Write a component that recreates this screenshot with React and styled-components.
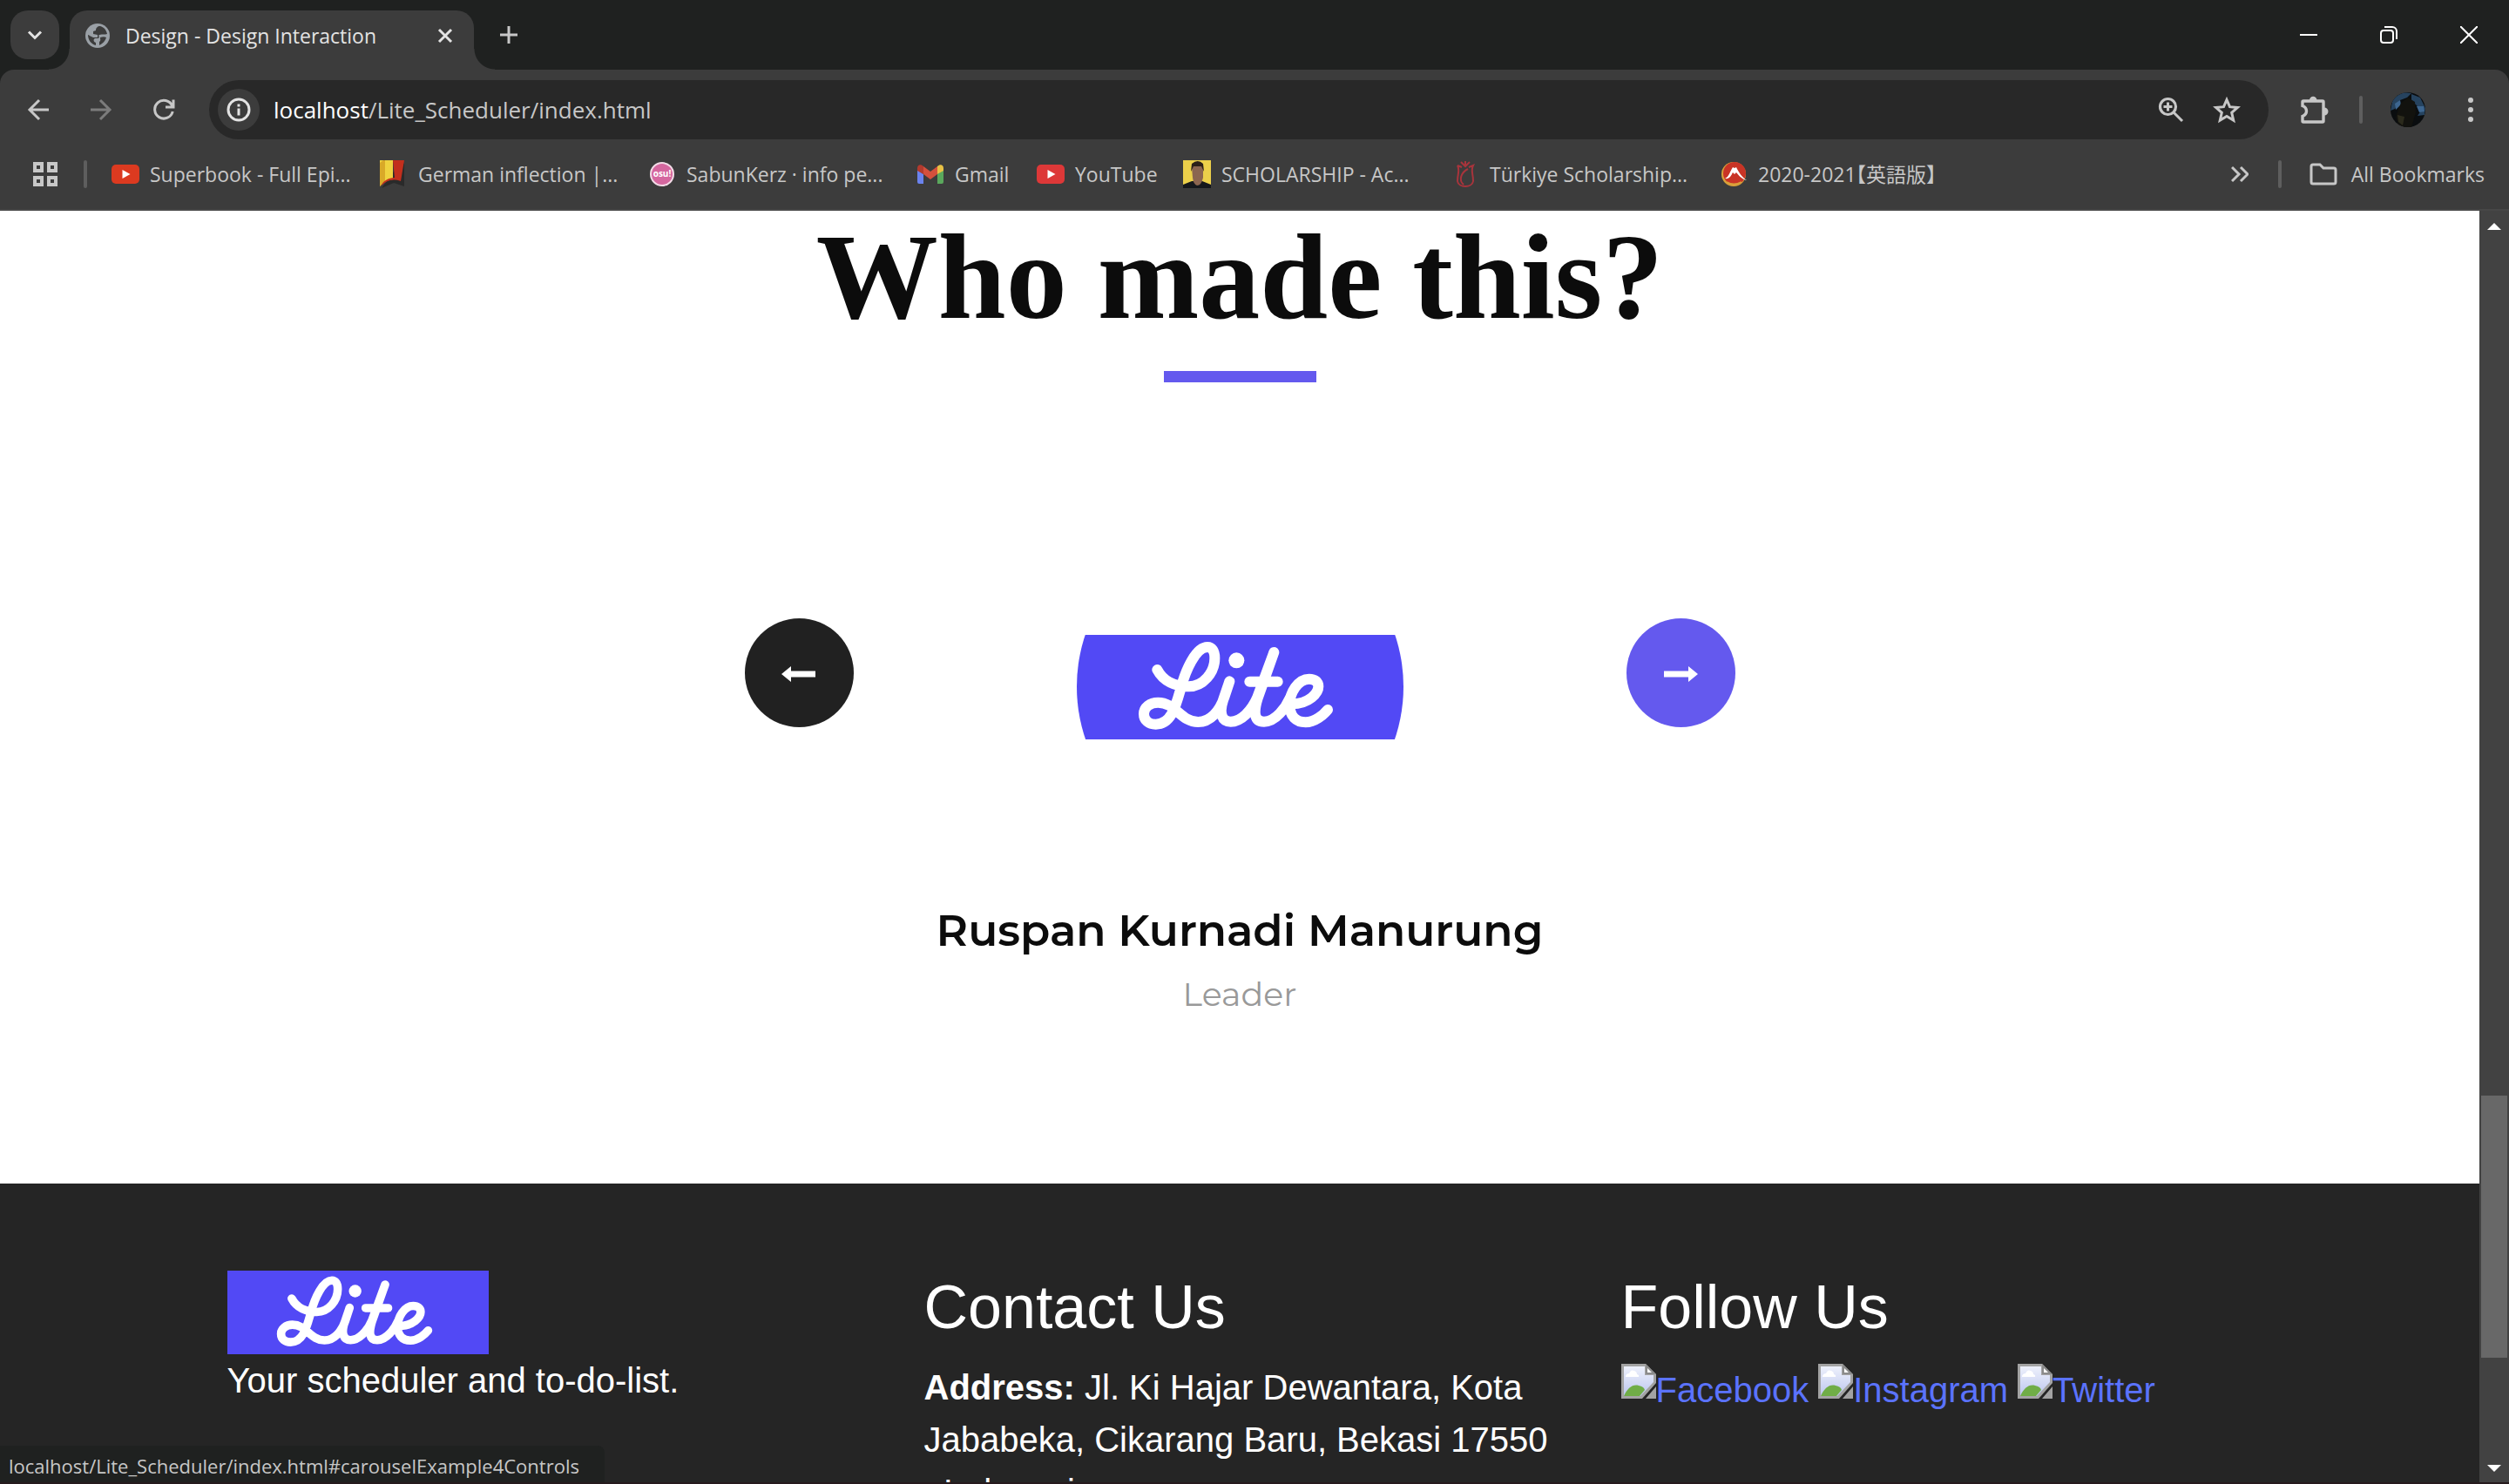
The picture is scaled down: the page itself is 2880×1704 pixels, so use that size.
import React from "react";
import styled, { createGlobalStyle } from "styled-components";

const GlobalStyle = createGlobalStyle`
  *, *::before, *::after { box-sizing: border-box; }
  body { margin: 0; overflow: hidden; background: #252525; }
  h1, h2, h3, p { margin: 0; font-weight: 400; }
  button { border: 0; padding: 0; background: none; color: inherit; font: inherit; cursor: pointer; }
  a { color: inherit; text-decoration: none; }
  svg { display: block; flex: none; }
`;

const uiFont = `"Segoe UI", "Open Sans", "Noto Sans CJK JP", sans-serif`;
const pageFont = `Arial, "Liberation Sans", sans-serif`;
const headingFont = `Montserrat, Inter, sans-serif`;

const Window = styled.div`
  display: flex;
  flex-direction: column;
  height: 100vh;
  overflow: hidden;
  border-bottom: 2px solid #261a1d;
`;

/* ---------- Browser frame ---------- */

const Frame = styled.header`
  flex: none;
  background: #1f2120;
  color: #c7c7c7;
  font-family: ${uiFont};
  font-size: 23px;
  line-height: 32px;
`;

const TabStrip = styled.div`
  display: flex;
  align-items: stretch;
  height: 80px;
  padding: 12px 0 0 12px;
`;

const TabSearch = styled.button`
  display: grid;
  place-items: center;
  width: 56px;
  height: 56px;
  border-radius: 20px;
  background: #3c3c3c;
  color: #e3e3e3;
`;

const Tab = styled.div`
  position: relative;
  display: flex;
  align-items: center;
  gap: 18px;
  width: 464px;
  margin-left: 12px;
  padding: 0 24px 10px 18px;
  border-radius: 20px 20px 0 0;
  background: #3c3c3c;
  color: #e3e3e3;

  &::before, &::after {
    content: "";
    position: absolute;
    bottom: 0;
    width: 24px;
    height: 24px;
  }
  &::before {
    right: 100%;
    background: radial-gradient(circle at 0 0, transparent 23px, #3c3c3c 24px);
  }
  &::after {
    left: 100%;
    background: radial-gradient(circle at 100% 0, transparent 23px, #3c3c3c 24px);
  }
`;

const TabTitle = styled.span`
  flex: 1;
  white-space: nowrap;
`;

const NewTab = styled.button`
  display: grid;
  place-items: center;
  width: 56px;
  height: 56px;
  margin-left: 12px;
`;

const WindowControls = styled.div`
  display: flex;
  margin-left: auto;
`;

const WindowButton = styled.button`
  display: grid;
  place-items: center;
  width: 92px;
  height: 56px;
  color: #ffffff;
`;

const Toolbar = styled.div`
  display: flex;
  align-items: center;
  height: 92px;
  padding: 0 24px 0 16px;
  border-radius: 16px 16px 0 0;
  background: #3c3c3c;
`;

const ToolButton = styled.button`
  display: grid;
  place-items: center;
  width: ${(p) => p.$width || 56}px;
  height: 56px;
  color: ${(p) => (p.$dim ? "#7c7c7c" : "#c7c7c7")};
`;

const NavButtons = styled.div`
  display: flex;
  gap: 16px;
  margin-right: 24px;
`;

const AddressBar = styled.div`
  display: flex;
  align-items: center;
  flex: 1;
  height: 68px;
  padding: 0 16px 0 10px;
  border-radius: 34px;
  background: #282828;
`;

const SiteInfo = styled.button`
  display: grid;
  place-items: center;
  width: 48px;
  height: 48px;
  margin-right: 16px;
  border-radius: 50%;
  background: #3c3c3c;
  color: #e3e3e3;
`;

const Address = styled.div`
  flex: 1;
  color: #c7c7c7;
  font-size: 26px;
  line-height: 36px;
`;

const Host = styled.span`
  color: #ffffff;
`;

const Divider = styled.span`
  flex: none;
  width: 4px;
  height: 32px;
  border-radius: 2px;
  background: #5e5e5e;
`;

const ToolbarEnd = styled.div`
  display: flex;
  align-items: center;
  gap: 24px;
  padding-left: 24px;
`;

const BookmarkBar = styled.nav`
  display: flex;
  align-items: center;
  height: 70px;
  padding: 0 28px 12px 38px;
  border-bottom: 2px solid #474747;
  background: #3c3c3c;
`;

const AppsButton = styled(ToolButton)`
  margin-right: 30px;
`;

const BookmarkList = styled.div`
  display: flex;
  gap: 32px;
  flex: 1;
  margin-left: 28px;
`;

const Bookmark = styled.a`
  display: flex;
  align-items: center;
  gap: 12px;
  width: ${(p) => p.$width}px;
  white-space: nowrap;
  font-feature-settings: "halt";
`;

const Overflow = styled.button`
  margin-right: 34px;
`;

const AllBookmarks = styled.button`
  display: flex;
  align-items: center;
  gap: 16px;
  margin-left: 32px;
  white-space: nowrap;
`;

/* ---------- Page ---------- */

const Viewport = styled.div`
  position: relative;
  display: flex;
  flex: 1;
  min-height: 0;
`;

const Page = styled.main`
  flex: 1;
  overflow: hidden;
  background: #ffffff;
  font-family: ${pageFont};
`;

const Team = styled.section`
  display: flex;
  flex-direction: column;
  align-items: center;
  padding-bottom: 190px;
`;

const TeamTitle = styled.h1`
  color: #0c0c0c;
  font-family: "Times New Roman", "Liberation Serif", serif;
  font-size: 140px;
  font-weight: 700;
  line-height: 152px;
`;

const TitleRule = styled.div`
  width: 175px;
  height: 13px;
  margin-top: 32px;
  background: #6459ee;
`;

const Carousel = styled.div`
  display: flex;
  justify-content: center;
  gap: 256px;
  margin-top: 162px;
`;

const CarouselButton = styled.a`
  display: grid;
  place-items: center;
  width: 125px;
  height: 125px;
  margin-top: 109px;
  border-radius: 50%;
  background: ${(p) => (p.$accent ? "#6459ee" : "#212121")};
  color: #ffffff;
`;

const Portrait = styled.div`
  display: flex;
  align-items: center;
  width: 375px;
  height: 375px;
  border-radius: 50%;
  overflow: hidden;
`;

const MemberName = styled.h2`
  margin-top: 63px;
  color: #0c0c0c;
  font-family: ${headingFont};
  font-size: 50px;
  font-weight: 600;
  line-height: 60px;
`;

const MemberRole = styled.p`
  margin-top: 16px;
  color: #999999;
  font-family: ${headingFont};
  font-size: 38px;
  line-height: 54px;
`;

const Footer = styled.footer`
  min-height: 600px;
  padding: 100px 38px;
  background: #252525;
  color: #ffffff;
  font-size: 40px;
  line-height: 60px;
`;

const FooterColumns = styled.div`
  display: grid;
  grid-template-columns: repeat(3, 1fr);
  gap: 75px;
  max-width: 2325px;
  margin: 0 auto;
`;

const FooterTitle = styled.h3`
  margin-bottom: 20px;
  font-size: 70px;
  line-height: 84px;
`;

const BrandSlot = styled.div`
  width: 300px;
`;

const SocialLinks = styled.div`
  display: flex;
  gap: 11px;
`;

const SocialLink = styled.a`
  display: flex;
  color: #5b73ff;
  line-height: 66px;

  svg { margin-top: 3px; }
`;

const Scrollbar = styled.div`
  display: flex;
  flex-direction: column;
  align-items: center;
  flex: none;
  width: 34px;
  padding: 14px 0 12px;
  background: #424242;
`;

const ScrollTrack = styled.div`
  flex: 1;
  display: flex;
  flex-direction: column;
  justify-content: flex-end;
  padding-bottom: 123px;
`;

const ScrollThumb = styled.div`
  width: 30px;
  height: 301px;
  background: #686868;
`;

const StatusBubble = styled.div`
  position: absolute;
  left: 0;
  bottom: 0;
  width: 694px;
  padding: 7px 10px 3px;
  border-radius: 0 8px 0 0;
  background: #1f2120;
  color: #c7c7c7;
  font-family: ${uiFont};
  font-size: 22px;
  line-height: 32px;
  white-space: nowrap;
`;

/* ---------- Icons ---------- */

const Line = ({ size = 24, width = 3, children, ...rest }) => (
  <svg width={size} height={size} viewBox={`0 0 ${size} ${size}`} fill="none" stroke="currentColor" strokeWidth={width} aria-hidden="true" {...rest}>
    {children}
  </svg>
);

const ChevronIcon = () => <Line size={20}><path d="M3 6.5l7 7 7-7" /></Line>;
const CloseIcon = () => <Line size={18}><path d="M2 2l14 14M16 2L2 16" /></Line>;
const PlusIcon = () => <Line size={22}><path d="M11 1v20M1 11h20" /></Line>;
const BackIcon = () => <Line size={26}><path d="M25 13H3M14 2L3 13l11 11" /></Line>;
const ForwardIcon = () => <Line size={26}><path d="M1 13h22M12 2l11 11-11 11" /></Line>;
const ReloadIcon = () => (
  <Line size={26}><path d="M22.6 8.5A10.4 10.4 0 1 0 23.2 15M24 1.5v8.5h-9" /></Line>
);
const InfoIcon = () => (
  <Line size={28}>
    <circle cx="14" cy="14" r="12" />
    <path d="M14 12.5v8M14 7.5v3" />
  </Line>
);
const ZoomIcon = () => (
  <Line size={30}>
    <circle cx="11.500" cy="11.500" r="9" strokeWidth="3.200" />
    <path d="M18.500 18.500l9.500 9.500M11.500 6.500v10M6.500 11.500h10" />
  </Line>
);
const StarIcon = () => (
  <Line size={32}>
    <path d="M16 4.500l3.500 8.200 8.900.800-6.700 5.900 2 8.700L16 23.500l-7.700 4.600 2-8.700-6.700-5.900 8.900-.800z" />
  </Line>
);
const PuzzleIcon = () => (
  <svg width="34" height="34" viewBox="0 0 34 34" fill="none" aria-hidden="true">
    <path d="M5 7h22a1 1 0 0 1 1 1v22a1 1 0 0 1-1 1H5a1 1 0 0 1-1-1v-5.500c6-2.500 6-9.500 0-12V8a1 1 0 0 1 1-1z" stroke="currentColor" strokeWidth="3.400" />
    <path d="M12 6a4.200 4.200 0 0 1 8.400 0zM29 14.500a4.500 4.500 0 0 1 0 9z" fill="currentColor" />
  </svg>
);
const MenuIcon = () => (
  <svg width="8" height="30" viewBox="0 0 8 30" fill="currentColor" aria-hidden="true">
    <circle cx="4" cy="4" r="3" /><circle cx="4" cy="15" r="3" /><circle cx="4" cy="26" r="3" />
  </svg>
);
const AvatarIcon = () => (
  <svg width="40" height="40" viewBox="0 0 40 40" aria-hidden="true">
    <defs><clipPath id="avatar"><circle cx="20" cy="20" r="20" /></clipPath></defs>
    <g clipPath="url(#avatar)">
      <rect width="40" height="40" fill="#0a0d0f" />
      <path d="M3 6l12-6 9 1-5 5-8 3-6 10-5 2zM24 2l10 4 6 12-1 8-8 1 4-6-6-7-5-3z" fill="#26435f" />
      <path d="M5 13l6-4 1 5-6 6zM30 16l8 0 1 6-6 1z" fill="#3d6690" />
      <path d="M12 12l8-6 8 5 1 12-5 17H10L6 28z" fill="#12120e" />
      <path d="M8 26l8 2-2 10-5-4z" fill="#2b2a1c" />
    </g>
  </svg>
);
const MinimizeIcon = () => <Line size={20} width={2}><path d="M0 10h20" /></Line>;
const RestoreIcon = () => (
  <Line size={20} width={2}>
    <rect x="1" y="5" width="14" height="14" rx="3" />
    <path d="M5 1h9a5 5 0 0 1 5 5v9" />
  </Line>
);
const WindowCloseIcon = () => <Line size={20} width={2}><path d="M0 0l20 20M20 0L0 20" /></Line>;
const GlobeIcon = () => (
  <svg width="28" height="28" viewBox="0 0 28 28" aria-hidden="true">
    <circle cx="14" cy="14" r="14" fill="#9aa0a6" />
    <path d="M17 3c-3 0-5 2-5 5l-3 1v3l5 1v3h-5c-3-1-5-3-6-3 0 6 4 11 9 12v-3c-3-1-3-4-1-5h4c2-2-1-3 1-4 4-1 6 0 9-1-1-5-4-8-8-9zM17 16c3-1 5-1 7 0-1 4-4 7-8 9v-4c2-1 1-3 1-5z" fill="#3c3c3c" />
  </svg>
);
const AppsIcon = () => (
  <Line size={28} width={4}>
    <path d="M2 2h8v8H2zM18 2h8v8h-8zM2 18h8v8H2zM18 18h8v8h-8z" />
  </Line>
);
const FolderIcon = () => (
  <Line size={32} width={3}>
    <path d="M2 7a2 2 0 0 1 2-2h8l4 4h12a2 2 0 0 1 2 2v14a2 2 0 0 1-2 2H4a2 2 0 0 1-2-2z" />
  </Line>
);
const MoreIcon = () => <Line size={20}><path d="M1 2l8 8-8 8M11 2l8 8-8 8" /></Line>;

const Favicon = ({ children }) => (
  <svg width="32" height="32" viewBox="0 0 32 32" aria-hidden="true">{children}</svg>
);
const VideoFavicon = ({ color }) => (
  <Favicon>
    <rect y="5" width="32" height="22" rx="5" fill={color} />
    <path d="M12.500 11l9 5-9 5z" fill="#fff" />
  </Favicon>
);
const BookFavicon = () => (
  <Favicon>
    <path d="M2 32L16 26l12 4V4l-4-2z" fill="#2a2a2a" />
    <path d="M0 0h15v22C8 23 4 25 0 30z" fill="#efd23f" />
    <path d="M0 3l4-3h2v24L0 30z" fill="#d9a928" />
    <path d="M15 0h13l-4 24c-10-3-16-1-22 5 1-5 8-9 15-9z" fill="#c22f1d" />
  </Favicon>
);
const OsuLabel = styled.text`
  fill: #ffffff;
  font: 700 10px "Open Sans", sans-serif;
`;
const OsuFavicon = () => (
  <Favicon>
    <circle cx="16" cy="16" r="13" fill="#d5679f" stroke="#f3dbe7" strokeWidth="2" />
    <OsuLabel x="16" y="19" textAnchor="middle">osu!</OsuLabel>
  </Favicon>
);
const MailFavicon = () => (
  <Favicon>
    <path d="M1 11l7 5v11H3a2 2 0 0 1-2-2z" fill="#6b83ee" />
    <path d="M31 11l-7 5v11h5a2 2 0 0 0 2-2z" fill="#5aa85c" />
    <path d="M8 7l8 6 8-6v9l-8 6-8-6z" fill="#d4503c" />
    <path d="M1 12V9c0-4 4-5 7-2v9z" fill="#b23a2e" />
    <path d="M31 12V9c0-4-4-5-7-2v9z" fill="#e8c145" />
  </Favicon>
);
const PersonFavicon = () => (
  <Favicon>
    <rect width="32" height="32" fill="#ecd04a" />
    <path d="M0 32v-4l10-4h12l10 4v4z" fill="#15181c" />
    <path d="M10 8q6-6 13 0v12q-2 9-7 9-4-1-5-9z" fill="#8b6550" />
    <path d="M9 13l1-9q7-6 13 0l1 9-3-6H12z" fill="#2b1f18" />
  </Favicon>
);
const TulipFavicon = () => (
  <Favicon>
    <g fill="none" stroke="#a8343c" strokeWidth="2">
      <path d="M7 6c3 6 0 9 0 18 1 8 17 8 18 0 0-9-3-12 0-18l-5 2M7 6l5 2" />
      <path d="M14 28c-6-5-3-14 5-18" />
      <path d="M11 2l5 5 5-5M16 1v5" />
    </g>
  </Favicon>
);
const MountainFavicon = () => (
  <Favicon>
    <circle cx="16" cy="16" r="14" fill="#d9a13a" />
    <circle cx="17" cy="15" r="13" fill="#c93426" />
    <path d="M6 21c5-2 6-9 9-13l2 1 2-1c3 6 6 11 12 15-7-2-9-6-12-9l-2 2-2-2c-2 4-4 8-9 7z" fill="#fff" />
    <path d="M8 25q8 5 17 0" stroke="#d9a13a" strokeWidth="2" fill="none" />
  </Favicon>
);

const ArrowLeft = () => (
  <svg width="40" height="20" viewBox="0 0 40 20" fill="currentColor" aria-hidden="true">
    <path d="M0 11L11 2v5.500h28v7H11V20z" />
  </svg>
);
const ArrowRight = () => (
  <svg width="40" height="20" viewBox="0 0 40 20" fill="currentColor" aria-hidden="true">
    <path d="M40 11L29 2v5.500H1v7h28V20z" />
  </svg>
);

const LiteLogo = () => (
  <svg width="100%" viewBox="-160 0 1125 360" role="img" aria-label="Lite">
    <rect x="-160" width="1125" height="360" fill="#5249f5" />
    <g fill="none" stroke="#ffffff" strokeWidth="36" strokeLinecap="round" strokeLinejoin="round">
      <path d="M117 120C138 160 180 178 225 178C275 178 315 130 315 80C315 55 305 42 290 42C250 42 216 120 200 178C182 240 168 308 112 308C88 308 71 295 71 272C71 250 92 233 120 233C180 233 198 300 258 300C300 300 332 262 348 215L366 160L344 225C329 270 340 299 370 299C405 299 442 262 462 215L519 60L463 218C448 266 450 299 485 299C525 299 560 250 574 218" />
      <path d="M435 161H532" />
      <path d="M580 238C640 238 672 200 672 178C672 162 660 152 640 152C602 152 573 200 573 240C573 280 595 301 628 301C660 301 690 275 704 258" />
    </g>
    <circle cx="390" cy="88" r="27" fill="#ffffff" />
  </svg>
);

const BrokenImage = () => (
  <svg width="40" height="40" viewBox="0 0 40 40" aria-hidden="true">
    <defs>
      <linearGradient id="sky" x1="0" y1="0" x2="0" y2="1">
        <stop offset="0" stopColor="#eef1fc" /><stop offset="1" stopColor="#bcc6ee" />
      </linearGradient>
    </defs>
    <path d="M0 0h28l12 12v10L24 40H0z" fill="#a3a3a3" />
    <path d="M3 3h24v10h10v8L22 37H3z" fill="url(#sky)" />
    <path d="M5 14q1-3 4-3 2-5 6-3 3 1 3 4 3 1 2 3H5z" fill="#fff" />
    <path d="M3 37c4-9 10-14 17-12 4 1 6 2 7 5l-6 7z" fill="#70ad47" />
    <path d="M28 0l12 12H28z" fill="#8b8b8b" />
    <path d="M30 5l5 5h-5z" fill="#fff" />
    <path d="M40 26v14H28z" fill="#a3a3a3" />
  </svg>
);

const Triangle = ({ down }) => (
  <svg width="16" height="8" viewBox="0 0 16 8" fill="#ffffff" aria-hidden="true">
    <path d={down ? "M0 0h16L8 8z" : "M0 8h16L8 0z"} />
  </svg>
);

/* ---------- App ---------- */

const bookmarks = [
  { label: "Superbook - Full Epi...", icon: <VideoFavicon color="#dc3a20" />, width: 276 },
  { label: "German inflection |...", icon: <BookFavicon />, width: 276 },
  { label: "SabunKerz · info pe...", icon: <OsuFavicon />, width: 276 },
  { label: "Gmail", icon: <MailFavicon />, width: 106 },
  { label: "YouTube", icon: <VideoFavicon color="#dd3838" />, width: 136 },
  { label: "SCHOLARSHIP - Ac...", icon: <PersonFavicon />, width: 276 },
  { label: "Türkiye Scholarship...", icon: <TulipFavicon />, width: 276 },
  { label: "2020-2021【英語版】", icon: <MountainFavicon />, width: 276 },
];

const socials = ["Facebook", "Instagram", "Twitter"];

export default function App() {
  return (
    <Window>
      <GlobalStyle />
      <Frame>
        <TabStrip>
          <TabSearch aria-label="Search tabs"><ChevronIcon /></TabSearch>
          <Tab>
            <GlobeIcon />
            <TabTitle>Design - Design Interaction</TabTitle>
            <button aria-label="Close tab"><CloseIcon /></button>
          </Tab>
          <NewTab aria-label="New tab"><PlusIcon /></NewTab>
          <WindowControls>
            <WindowButton aria-label="Minimize"><MinimizeIcon /></WindowButton>
            <WindowButton aria-label="Restore"><RestoreIcon /></WindowButton>
            <WindowButton aria-label="Close"><WindowCloseIcon /></WindowButton>
          </WindowControls>
        </TabStrip>
        <Toolbar>
          <NavButtons>
            <ToolButton aria-label="Back"><BackIcon /></ToolButton>
            <ToolButton aria-label="Forward" $dim><ForwardIcon /></ToolButton>
            <ToolButton aria-label="Reload"><ReloadIcon /></ToolButton>
          </NavButtons>
          <AddressBar>
            <SiteInfo aria-label="View site information"><InfoIcon /></SiteInfo>
            <Address><Host>localhost</Host>/Lite_Scheduler/index.html</Address>
            <ToolButton $width={64} aria-label="Zoom"><ZoomIcon /></ToolButton>
            <ToolButton $width={64} aria-label="Bookmark this tab"><StarIcon /></ToolButton>
          </AddressBar>
          <ToolbarEnd>
            <ToolButton aria-label="Extensions"><PuzzleIcon /></ToolButton>
            <Divider />
            <ToolButton aria-label="Profile"><AvatarIcon /></ToolButton>
            <ToolButton $width={40} aria-label="Menu"><MenuIcon /></ToolButton>
          </ToolbarEnd>
        </Toolbar>
        <BookmarkBar>
          <AppsButton $width={28} aria-label="Apps"><AppsIcon /></AppsButton>
          <Divider />
          <BookmarkList>
            {bookmarks.map((b) => (
              <Bookmark key={b.label} href="#" $width={b.width}>{b.icon}{b.label}</Bookmark>
            ))}
          </BookmarkList>
          <Overflow aria-label="More bookmarks"><MoreIcon /></Overflow>
          <Divider />
          <AllBookmarks><FolderIcon />All Bookmarks</AllBookmarks>
        </BookmarkBar>
      </Frame>
      <Viewport>
        <Page>
          <Team>
            <TeamTitle>Who made this?</TeamTitle>
            <TitleRule />
            <Carousel>
              <CarouselButton href="#carouselExample4Controls" aria-label="Previous"><ArrowLeft /></CarouselButton>
              <Portrait><LiteLogo /></Portrait>
              <CarouselButton href="#carouselExample4Controls" aria-label="Next" $accent><ArrowRight /></CarouselButton>
            </Carousel>
            <MemberName>Ruspan Kurnadi Manurung</MemberName>
            <MemberRole>Leader</MemberRole>
          </Team>
          <Footer>
            <FooterColumns>
              <div>
                <BrandSlot><LiteLogo /></BrandSlot>
                <p>Your scheduler and to-do-list.</p>
              </div>
              <div>
                <FooterTitle>Contact Us</FooterTitle>
                <p><strong>Address:</strong> Jl. Ki Hajar Dewantara, Kota Jababeka, Cikarang Baru, Bekasi 17550 , Indonesia</p>
              </div>
              <div>
                <FooterTitle>Follow Us</FooterTitle>
                <SocialLinks>
                  {socials.map((name) => (
                    <SocialLink key={name} href="#"><BrokenImage />{name}</SocialLink>
                  ))}
                </SocialLinks>
              </div>
            </FooterColumns>
          </Footer>
        </Page>
        <Scrollbar>
          <Triangle />
          <ScrollTrack><ScrollThumb /></ScrollTrack>
          <Triangle down />
        </Scrollbar>
        <StatusBubble>localhost/Lite_Scheduler/index.html#carouselExample4Controls</StatusBubble>
      </Viewport>
    </Window>
  );
}
